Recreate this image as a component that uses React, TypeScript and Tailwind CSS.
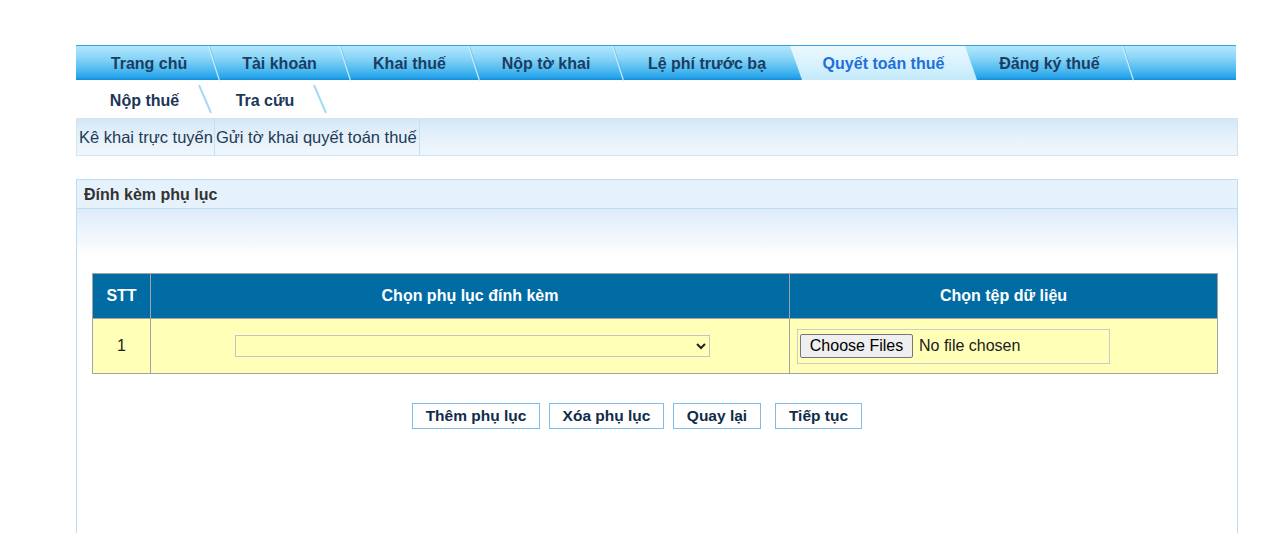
import React from "react";

const font = { fontFamily: '"Liberation Sans", Arial, sans-serif' };

function NavSep() {
  return (
    <svg width="12" height="35" viewBox="0 0 12 35" className="shrink-0 block">
      <line x1="1.5" y1="0" x2="12.5" y2="35" stroke="#4fb4e8" strokeWidth="1" opacity="0.6" />
      <line x1="0.5" y1="0" x2="11.5" y2="35" stroke="#d2f1fd" strokeWidth="1.2" opacity="0.9" />
    </svg>
  );
}

function SubSep() {
  return (
    <svg width="14" height="28" viewBox="0 0 14 28" className="shrink-0 block">
      <line x1="1" y1="0" x2="13" y2="28" stroke="#a4d9f3" strokeWidth="2" />
    </svg>
  );
}

export default function App() {
  return (
    <div className="min-h-[533px] bg-white pt-[45px] pl-[76px]" style={font}>
      <div className="w-[1161px]">
        {/* Main nav */}
        <div className="flex h-[35px] w-[1160px] border-t border-[#34a3e4] bg-[linear-gradient(to_bottom,#b2e7fb_0%,#8ad5f7_35%,#46b6ef_75%,#27a3e9_92%,#138ddb_100%)] text-[16px] font-bold text-[#1b3d62]">
          <div className="flex w-[132px] items-center justify-center pl-[14px] pt-[2px]">Trang chủ</div>
          <NavSep />
          <div className="flex w-[119px] items-center justify-center pt-[2px]">Tài khoản</div>
          <NavSep />
          <div className="flex w-[117px] items-center justify-center pt-[2px]">Khai thuế</div>
          <NavSep />
          <div className="flex w-[132px] items-center justify-center pt-[2px]">Nộp tờ khai</div>
          <NavSep />
          <div className="flex w-[166px] items-center justify-center pt-[2px]">Lệ phí trước bạ</div>
          <div className="flex w-[187px] items-center justify-center bg-[linear-gradient(to_bottom,#eaf8fe_0%,#d9f2fd_50%,#c3e9fa_100%)] pt-[2px] text-[#1f6fd8] [clip-path:polygon(0_0,175px_0,187px_100%,12px_100%)]">
            Quyết toán thuế
          </div>
          <div className="flex w-[145px] items-center justify-center pt-[2px]">Đăng ký thuế</div>
          <NavSep />
          <div className="w-[102px]" />
        </div>

        {/* Sub nav */}
        <div className="flex h-[38px] items-start pt-[5px] text-[16px] font-bold text-[#1c3757]">
          <div className="flex h-[28px] w-[122px] items-center justify-center pl-[15px] pt-[3px]">Nộp thuế</div>
          <SubSep />
          <div className="flex h-[28px] w-[101px] items-center justify-center pl-[5px] pt-[3px]">Tra cứu</div>
          <SubSep />
        </div>

        {/* Breadcrumb */}
        <div className="flex h-[38px] w-[1162px] border border-[#d3e3ef] bg-[linear-gradient(to_bottom,#d4e7f7_0%,#e5f1fb_50%,#eff7fd_100%)] text-[16.5px] text-[#1f3a56]">
          <div className="flex items-center border-r border-[#c9ddec] pl-[2px] pr-[1px] pt-[1px]">Kê khai trực tuyến</div>
          <div className="flex items-center border-r border-[#c9ddec] pl-[1px] pr-[2px] pt-[1px]">Gửi tờ khai quyết toán thuế</div>
        </div>

        {/* Panel */}
        <div className="mt-[23px] h-[370px] w-[1162px] border border-[#bddcf5]">
          <div className="flex h-[29px] items-center border-b border-[#bddcf5] bg-[#e6f2fb] pl-[7px] pt-[1px] text-[16px] font-bold text-[#333333]">
            Đính kèm phụ lục
          </div>
          <div className="h-[46px] bg-[linear-gradient(to_bottom,#deecf9_0%,#f3f8fd_70%,#ffffff_100%)]" />
          <div className="mt-[18px] pl-[15px]">
            <table className="w-[1126px] border-collapse border border-[#a3a3a3]">
              <thead>
                <tr className="h-[45px] bg-[#016ca4] text-[16px] font-bold text-white">
                  <th className="w-[58px] border border-[#a3a3a3] text-center font-bold">STT</th>
                  <th className="w-[639px] border border-[#a3a3a3] text-center font-bold">Chọn phụ lục đính kèm</th>
                  <th className="border border-[#a3a3a3] text-center font-bold">Chọn tệp dữ liệu</th>
                </tr>
              </thead>
              <tbody>
                <tr className="h-[55px] bg-[#ffffb8] text-[16px] text-[#222222]">
                  <td className="border border-[#a3a3a3] text-center">1</td>
                  <td className="border border-[#a3a3a3]">
                    <div className="flex justify-center pl-[4px]">
                      <select className="h-[22px] w-[475px] border border-[#c4c4c4] bg-transparent text-[14px]">
                        <option></option>
                      </select>
                    </div>
                  </td>
                  <td className="border border-[#a3a3a3] pl-[7px]">
                    <div className="flex h-[35px] w-[313px] items-center border border-[#cbcbcb] pl-[2px] text-[16px]">
                      <span className="flex h-[24px] w-[113px] items-center justify-center rounded-[2px] border border-[#767676] bg-[#efefef] text-black">
                        Choose Files
                      </span>
                      <span className="ml-[6px] text-[#1a1a1a]">No file chosen</span>
                    </div>
                  </td>
                </tr>
              </tbody>
            </table>
          </div>
          <div className="mt-[29px] flex pl-[335px] text-[15.5px] font-bold text-[#0f2c4a]">
            <button className="h-[26px] w-[128px] border border-[#7fbcee] bg-white">Thêm phụ lục</button>
            <button className="ml-[9px] h-[26px] w-[115px] border border-[#7fbcee] bg-white">Xóa phụ lục</button>
            <button className="ml-[9px] h-[26px] w-[88px] border border-[#7fbcee] bg-white">Quay lại</button>
            <button className="ml-[14px] h-[26px] w-[87px] border border-[#7fbcee] bg-white">Tiếp tục</button>
          </div>
        </div>
      </div>
    </div>
  );
}
